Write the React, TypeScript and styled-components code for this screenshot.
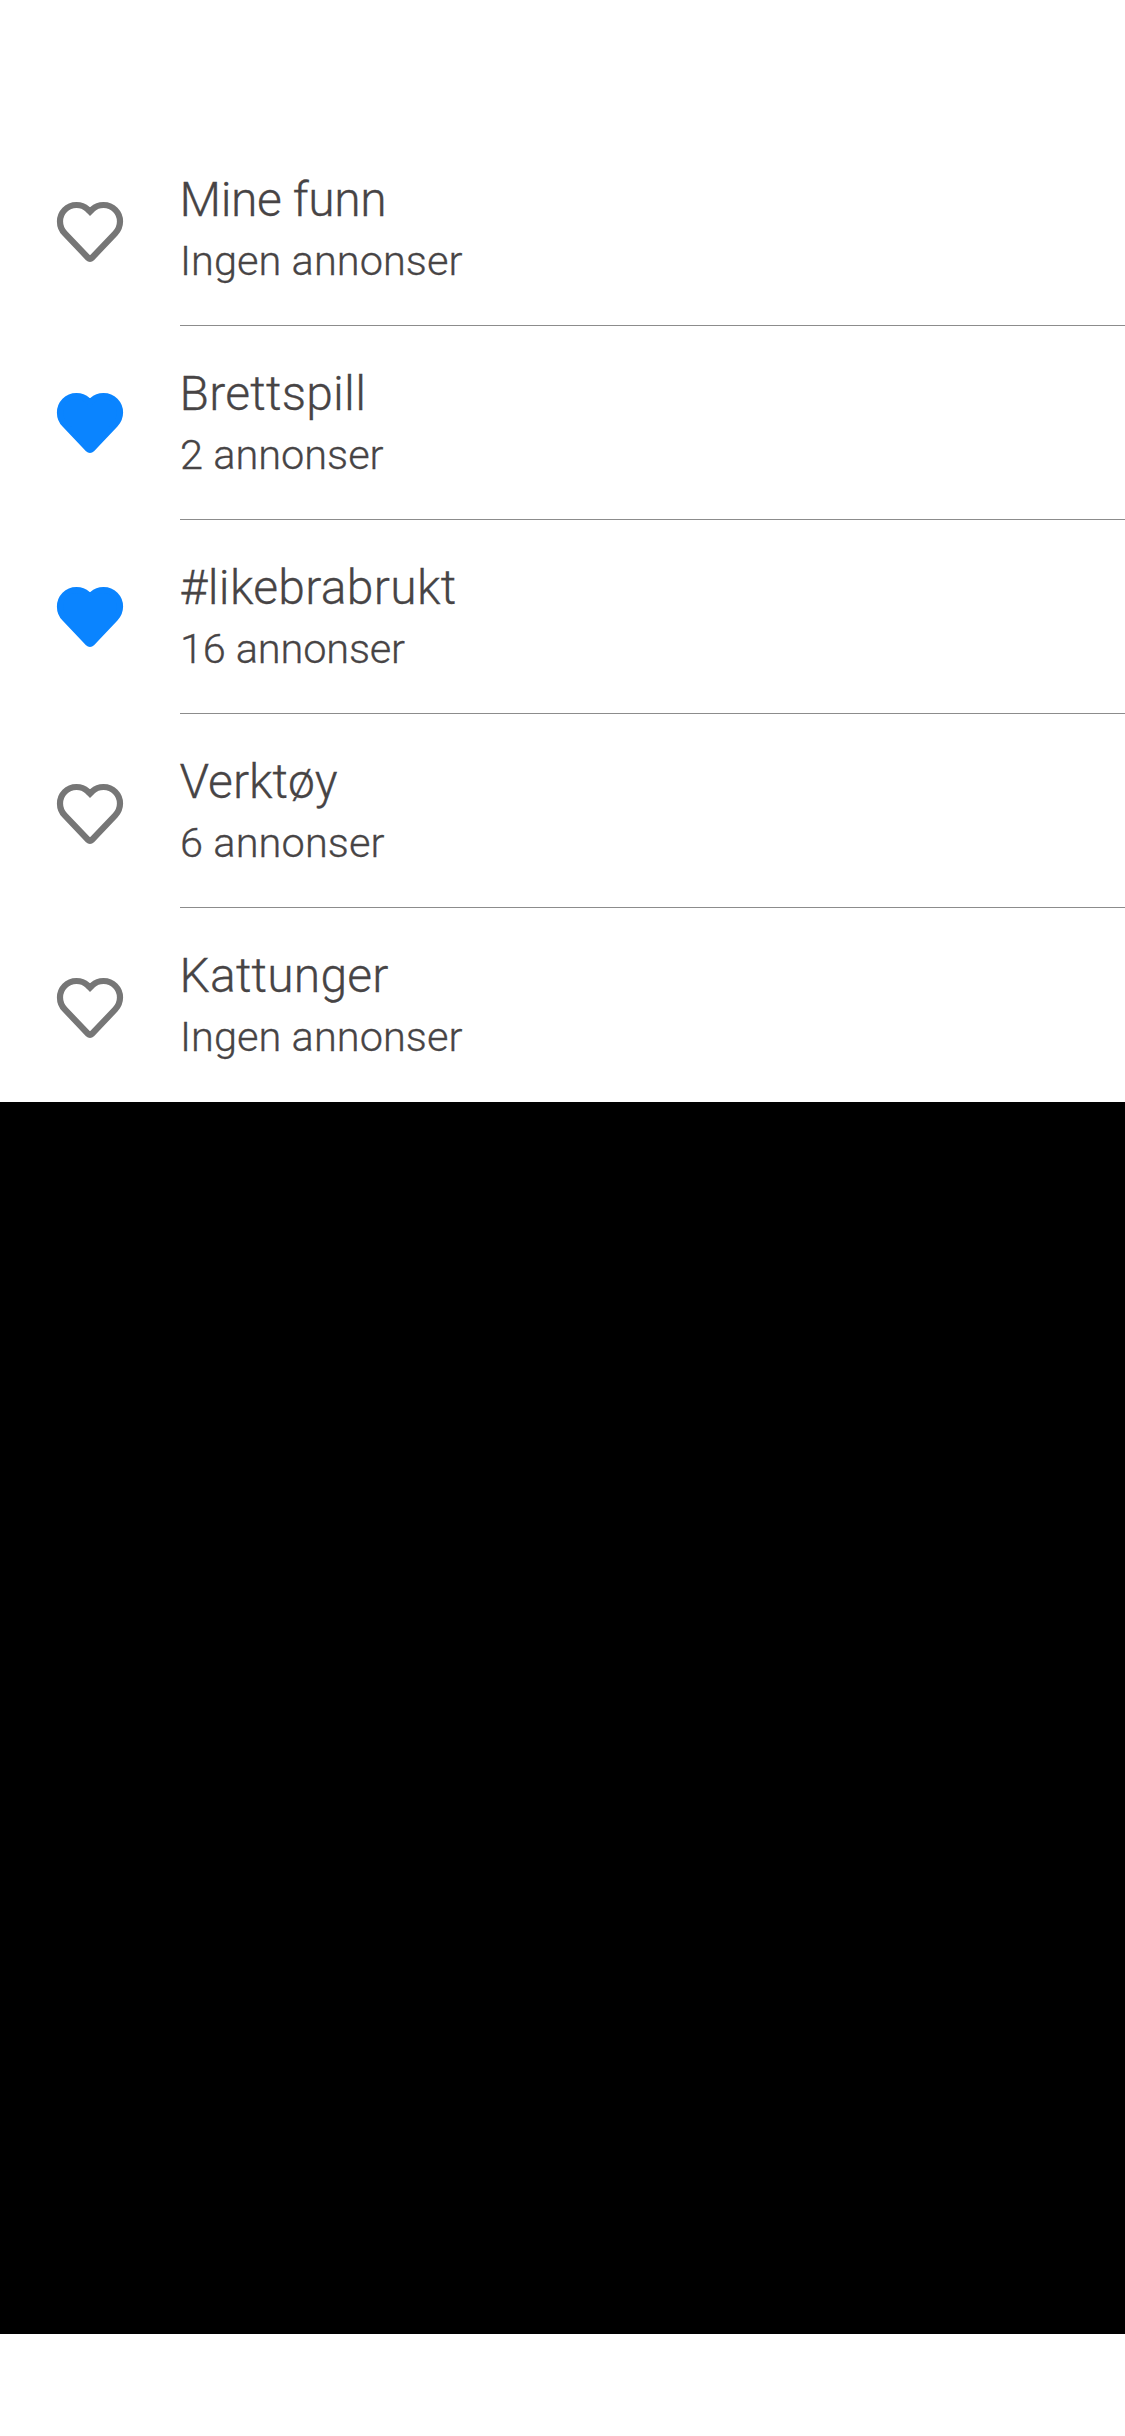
import styled, { createGlobalStyle } from "styled-components";

const GlobalStyle = createGlobalStyle`
  * { box-sizing: border-box; }
  body { margin: 0; background: #fff; }
`;

const Screen = styled.main`
  display: flex;
  flex-direction: column;
  width: 1125px;
  height: 2436px;
  padding: 132px 0 102px;
  background: #fff;
  font-family: Roboto, "Liberation Sans", sans-serif;
  font-weight: 300;
  color: #474445;
  -webkit-text-stroke: 0.3px #474445;
`;

const List = styled.ul`
  margin: 0;
  padding: 0;
  list-style: none;
`;

const Row = styled.li`
  display: flex;
  height: 194px;
`;

const IconCell = styled.div<{ $filled: boolean }>`
  flex: 0 0 180px;
  padding: ${(p) => (p.$filled ? 45 : 48)}px 0 0 40px;
`;

const HeartSvg = styled.svg<{ $filled: boolean }>`
  display: block;
  width: 100px;
  height: 100px;
  stroke-width: 6.2;
  stroke: ${(p) => (p.$filled ? "#0a84ff" : "#767676")};
  fill: ${(p) => (p.$filled ? "#0a84ff" : "none")};
`;

const Content = styled.div<{ $divided: boolean }>`
  flex: 1;
  padding-top: 40px;
  border-bottom: ${(p) => (p.$divided ? "1px solid #8c8c8c" : "none")};
`;

const Title = styled.div<{ $tracking: number }>`
  font-size: 48px;
  line-height: 56px;
  letter-spacing: ${(p) => p.$tracking}px;
  text-indent: -0.5px;
`;

const Subtitle = styled.div<{ $tracking: number }>`
  font-size: 41.5px;
  line-height: 66px;
  letter-spacing: ${(p) => p.$tracking}px;
`;

const Backdrop = styled.div`
  flex: 1;
  background: #000;
`;

function Heart({ filled }: { filled: boolean }) {
  return (
    <HeartSvg $filled={filled} viewBox="0 0 100 100">
      <path d="M50 31.6 L47.6 29.2 A16.6 16.6 0 0 0 36.4 25 A16.4 16.4 0 0 0 20 41.6 C20 46.4 21.6 50 24.8 53.4 L48.2 78 Q50 79.8 51.8 78 L75.2 53.4 C78.4 50 80 46.4 80 41.6 A16.4 16.4 0 0 0 63.6 25 A16.6 16.6 0 0 0 52.4 29.2 Z" />
    </HeartSvg>
  );
}

const folders = [
  { title: "Mine funn", titleTracking: -0.4, count: "Ingen annonser", countTracking: 0.05, filled: false },
  { title: "Brettspill", titleTracking: 0.25, count: "2 annonser", countTracking: 0, filled: true },
  { title: "#likebrabrukt", titleTracking: 0.3, count: "16 annonser", countTracking: -0.15, filled: true },
  { title: "Verktøy", titleTracking: 0, count: "6 annonser", countTracking: 0.1, filled: false },
  { title: "Kattunger", titleTracking: 0.2, count: "Ingen annonser", countTracking: 0.05, filled: false },
];

export default function App() {
  return (
    <>
      <GlobalStyle />
      <Screen>
        <List>
          {folders.map((folder, i) => (
            <Row key={folder.title}>
              <IconCell $filled={folder.filled}>
                <Heart filled={folder.filled} />
              </IconCell>
              <Content $divided={i < folders.length - 1}>
                <Title $tracking={folder.titleTracking}>{folder.title}</Title>
                <Subtitle $tracking={folder.countTracking}>{folder.count}</Subtitle>
              </Content>
            </Row>
          ))}
        </List>
        <Backdrop />
      </Screen>
    </>
  );
}
